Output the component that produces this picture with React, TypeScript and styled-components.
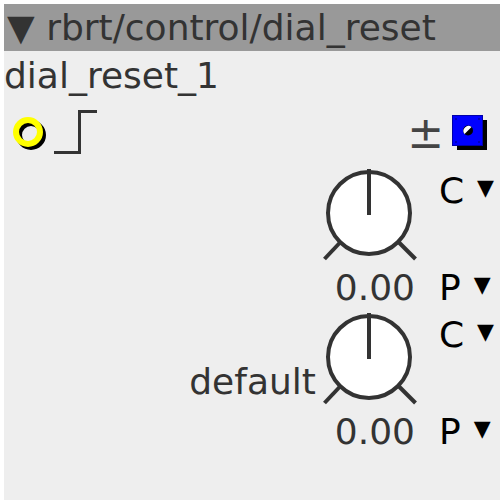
import React from 'react';
import styled, { createGlobalStyle } from 'styled-components';

const GlobalStyle = createGlobalStyle`
    body {
        margin: 0;
        background: #ffffff;
        font-family: "DejaVu Sans", sans-serif;
    }
`;

const Panel = styled.div`
    margin: 4px;
    width: 496px;
    height: 496px;
    background-color: #eeeeee;
    display: flex;
    flex-direction: column;
    overflow: hidden;
`;

const Header = styled.div`
    height: 47px;
    line-height: 47px;
    background-color: #999999;
    color: #333333;
    font-size: 36px;
    padding-left: 3px;
    white-space: nowrap;
`;

const Title = styled.div`
    height: 49px;
    line-height: 49px;
    color: #333333;
    font-size: 36px;
`;

const IconRow = styled.div`
    height: 65px;
    display: flex;
    align-items: center;
    justify-content: space-between;
    padding: 0 12px 0 5px;
`;

const IconGroup = styled.div`
    display: flex;
    align-items: center;
    gap: ${(p: { gap: number }) => p.gap}px;
`;

const PlusMinus = styled.span`
    font-size: 44px;
    line-height: 44px;
    color: #444444;
`;

const Controls = styled.div`
    display: flex;
    flex-direction: column;
    align-items: flex-end;
    gap: 2px;
    padding: 2px 6px 0 0;
`;

const ControlRow = styled.div`
    display: flex;
    align-items: center;
`;

const Label = styled.div`
    font-size: 36px;
    line-height: 42px;
    color: #333333;
    margin-right: 5px;
`;

const KnobColumn = styled.div`
    display: flex;
    flex-direction: column;
    align-items: flex-end;
    width: 96px;
`;

const Value = styled.div`
    font-size: 36px;
    line-height: 42px;
    color: #333333;
    margin-top: 4px;
    margin-right: 2px;
`;

const PortColumn = styled.div`
    align-self: stretch;
    display: flex;
    flex-direction: column;
    justify-content: space-between;
    margin-left: 22px;
    padding-top: 3px;
`;

const Port = styled.div`
    display: flex;
    align-items: flex-start;
    font-size: 36px;
    line-height: 42px;
    color: #000000;
`;

const Arrow = styled.span`
    font-size: 22px;
    line-height: 22px;
    margin-left: 13px;
    margin-top: ${(p: { top: number }) => p.top}px;
`;

const Knob = () => (
    <svg width="96" height="96" viewBox="0 0 96 96">
        <circle cx="48" cy="46" r="41" fill="#ffffff" stroke="#333333" strokeWidth="4" />
        <line x1="48" y1="2" x2="48" y2="48" stroke="#333333" strokeWidth="4" />
        <line x1="3.5" y1="92" x2="19.5" y2="75" stroke="#333333" strokeWidth="4" />
        <line x1="77.5" y1="75" x2="94.5" y2="92" stroke="#333333" strokeWidth="4" />
    </svg>
);

const RingIcon = () => (
    <svg width="40" height="40" viewBox="0 0 40 40">
        <circle cx="22" cy="22" r="12" fill="none" stroke="#000000" strokeWidth="6" />
        <circle cx="19" cy="19" r="12" fill="none" stroke="#ffff00" strokeWidth="6" />
    </svg>
);

const StepIcon = () => (
    <svg width="44" height="46" viewBox="0 0 44 46">
        <path d="M0 42.5 H25.5 V1.5 H43" fill="none" stroke="#333333" strokeWidth="3" />
    </svg>
);

const OutIcon = () => (
    <svg width="36" height="36" viewBox="0 0 36 36">
        <rect x="5" y="5" width="30" height="30" fill="#000000" />
        <rect x="0.5" y="0.5" width="30" height="30" fill="#0000ff" stroke="#0000aa" strokeWidth="1" />
        <circle cx="4" cy="4" r="0.8" fill="#000066" />
        <circle cx="27" cy="4" r="0.8" fill="#000066" />
        <circle cx="4" cy="27" r="0.8" fill="#000066" />
        <circle cx="27" cy="27" r="0.8" fill="#000066" />
        <circle cx="16" cy="15.5" r="5" fill="#000000" />
        <path d="M12.5 19 A5 5 0 0 1 19.5 12 Z" fill="#ffffff" />
    </svg>
);

const DialControl = ({ label, value }: { label?: string; value: string }) => (
    <ControlRow>
        {label && <Label>{label}</Label>}
        <KnobColumn>
            <Knob />
            <Value>{value}</Value>
        </KnobColumn>
        <PortColumn>
            <Port>C<Arrow top={7}>▼</Arrow></Port>
            <Port>P<Arrow top={7}>▼</Arrow></Port>
        </PortColumn>
    </ControlRow>
);

const App = () => (
    <>
        <GlobalStyle />
        <Panel>
            <Header>▼ rbrt/control/dial_reset</Header>
            <Title>dial_reset_1</Title>
            <IconRow>
                <IconGroup gap={5}>
                    <RingIcon />
                    <StepIcon />
                </IconGroup>
                <IconGroup gap={8}>
                    <PlusMinus>±</PlusMinus>
                    <OutIcon />
                </IconGroup>
            </IconRow>
            <Controls>
                <DialControl value="0.00" />
                <DialControl label="default" value="0.00" />
            </Controls>
        </Panel>
    </>
);

export default App;
